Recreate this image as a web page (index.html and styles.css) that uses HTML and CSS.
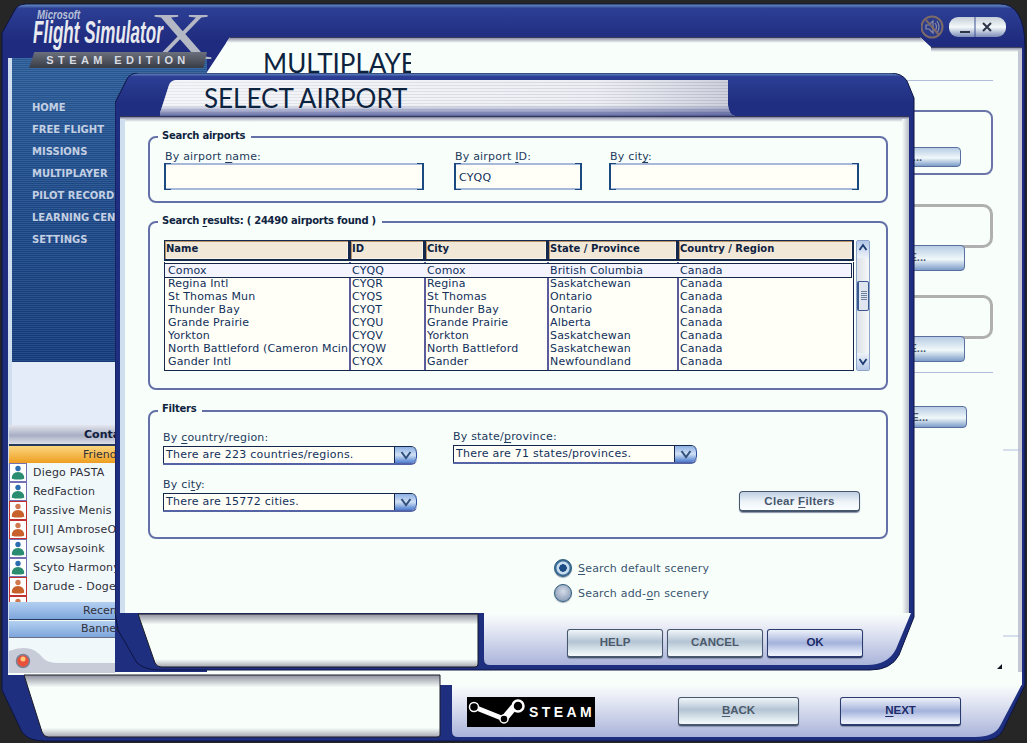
FILE: index.html
```html
<!DOCTYPE html>
<html lang="en">
<head>
    <meta charset="UTF-8">
    <title>Flight Simulator X - Select Airport</title>
    <link rel="stylesheet" href="styles.css">
</head>
<body>
<section class="main-window">
    <svg class="chrome" width="1027" height="743" viewBox="0 0 1027 743">
        <defs>
            <linearGradient id="mainBlue" x1="0" y1="0" x2="0" y2="1">
                <stop offset="0" stop-color="#6f97c9"/>
                <stop offset="0.006" stop-color="#2c3f95"/>
                <stop offset="0.05" stop-color="#1f2b7e"/>
                <stop offset="1" stop-color="#1f2f80"/>
            </linearGradient>
            <linearGradient id="topShade" x1="0" y1="0" x2="0" y2="1">
                <stop offset="0" stop-color="#080c30"/>
                <stop offset="0.25" stop-color="#9a9cb0"/>
                <stop offset="1" stop-color="#f8fffb"/>
            </linearGradient>
            <linearGradient id="footFill" x1="0" y1="0" x2="0" y2="1">
                <stop offset="0" stop-color="#f8fffb"/>
                <stop offset="0.2" stop-color="#eef0f8"/>
                <stop offset="1" stop-color="#aab4da"/>
            </linearGradient>
            <linearGradient id="boxFill" x1="0" y1="0" x2="0" y2="1">
                <stop offset="0" stop-color="#8d8f9c"/>
                <stop offset="0.2" stop-color="#f8fffb"/>
                <stop offset="0.85" stop-color="#f8fffb"/>
                <stop offset="1" stop-color="#a5a7b0"/>
            </linearGradient>
        </defs>
        <path d="M2 33 L16 8 Q19 4 26 4 L1000 4 Q1012 4 1018 14 Q1025 25 1025 47 L1025 685 L1003 730 Q998 741 980 741 L45 741 Q28 741 22 732 L2 690 Z" fill="url(#mainBlue)" stroke="#0c1440" stroke-width="1"/>
        <path d="M230 37 L920 37 L931 47 L1022 47 L1022 685 L207 685 L207 72 Z" fill="#f8fffb"/>
        <path d="M230 37 L920 37 L926 43 L226 43 Z" fill="url(#topShade)"/>
        <rect x="931" y="47" width="91" height="5" fill="url(#topShade)"/>
        <rect x="1018" y="50" width="4" height="635" fill="#c5c8d4"/>
        <path d="M440 672 L1022 672 L1022 685 L440 685 Z" fill="#f8fffb"/>
        <path d="M452 684 L1022 684 L1000 726 Q994 737 975 737 L458 737 Q452 737 452 731 Z" fill="url(#footFill)"/>
        <rect x="8" y="672" width="432" height="3" fill="#f8fffb"/>
        <path d="M24 675 L440 675 L440 735 Q440 737 437 737 L48 737 Q44 737 42 732 Z" fill="url(#boxFill)" stroke="#1a1a28" stroke-width="1"/>
        <line x1="1003" y1="450" x2="1022" y2="450" stroke="#b4bcdc"/>
        <line x1="1003" y1="636" x2="1022" y2="636" stroke="#b4bcdc"/>
        <path d="M1002 664 L1002 669 L997 669 Z" fill="#10141c"/>
    </svg>

    <div class="logo">
        <span class="logo-x">X</span>
        <span class="logo-ms">Microsoft</span>
        <span class="logo-fs">Flight Simulator</span>
        <span class="logo-band">STEAM EDITION</span>
    </div>

    <svg class="win-controls" width="90" height="26" viewBox="0 0 90 26">
        <defs>
            <linearGradient id="pill" x1="0" y1="0" x2="0" y2="1">
                <stop offset="0" stop-color="#c4ccd8"/>
                <stop offset="0.5" stop-color="#f4fafa"/>
                <stop offset="1" stop-color="#7c8cb8"/>
            </linearGradient>
        </defs>
        <circle cx="11" cy="13" r="10.5" fill="#2a3a8c" stroke="#7d6a68" stroke-width="2"/>
        <path d="M5 11 L8 11 L12 7 L12 19 L8 15 L5 15 Z" fill="none" stroke="#8a8ca0" stroke-width="1.2"/>
        <path d="M14 9 Q17 13 14 17 M16 7 Q20 13 16 19" fill="none" stroke="#8a8ca0" stroke-width="1.2"/>
        <line x1="5" y1="6" x2="18" y2="21" stroke="#7d6a68" stroke-width="2"/>
        <rect x="28" y="3" width="57" height="20" rx="9" fill="url(#pill)"/>
        <line x1="54" y1="3" x2="54" y2="23" stroke="#3c5098"/>
        <rect x="39" y="17" width="10" height="2" fill="#2c3448"/>
        <path d="M62 9 L70 17 M70 9 L62 17" stroke="#2c3448" stroke-width="2"/>
    </svg>

    <div class="left-col">
        <nav class="side-nav">
            <a>HOME</a>
            <a>FREE FLIGHT</a>
            <a>MISSIONS</a>
            <a>MULTIPLAYER</a>
            <a>PILOT RECORDS</a>
            <a>LEARNING CENTER</a>
            <a>SETTINGS</a>
        </nav>
        <div class="side-gap"></div>
        <div class="contacts">
            <div class="contacts-head">Contacts</div>
            <div class="group group-open">Friends</div>
            <ul class="buddy-list">
                <li><svg class="buddy on" viewBox="0 0 18 18"><circle class="head" cx="9" cy="4.5" r="3"/><path d="M2 16 Q2 8.5 9 8.5 Q16 8.5 16 16 Q9 18 2 16 Z"/></svg>Diego PASTA</li>
                <li><svg class="buddy on" viewBox="0 0 18 18"><circle class="head" cx="9" cy="4.5" r="3"/><path d="M2 16 Q2 8.5 9 8.5 Q16 8.5 16 16 Q9 18 2 16 Z"/></svg>RedFaction</li>
                <li><svg class="buddy off" viewBox="0 0 18 18"><circle class="head" cx="9" cy="4.5" r="3"/><path d="M2 16 Q2 8.5 9 8.5 Q16 8.5 16 16 Q9 18 2 16 Z"/></svg>Passive Menis</li>
                <li><svg class="buddy off" viewBox="0 0 18 18"><circle class="head" cx="9" cy="4.5" r="3"/><path d="M2 16 Q2 8.5 9 8.5 Q16 8.5 16 16 Q9 18 2 16 Z"/></svg>[UI] AmbroseO</li>
                <li><svg class="buddy on" viewBox="0 0 18 18"><circle class="head" cx="9" cy="4.5" r="3"/><path d="M2 16 Q2 8.5 9 8.5 Q16 8.5 16 16 Q9 18 2 16 Z"/></svg>cowsaysoink</li>
                <li><svg class="buddy on" viewBox="0 0 18 18"><circle class="head" cx="9" cy="4.5" r="3"/><path d="M2 16 Q2 8.5 9 8.5 Q16 8.5 16 16 Q9 18 2 16 Z"/></svg>Scyto Harmony</li>
                <li><svg class="buddy off" viewBox="0 0 18 18"><circle class="head" cx="9" cy="4.5" r="3"/><path d="M2 16 Q2 8.5 9 8.5 Q16 8.5 16 16 Q9 18 2 16 Z"/></svg>Darude - Doge</li>
                <li><svg class="buddy off" viewBox="0 0 18 18"><circle class="head" cx="9" cy="4.5" r="3"/><path d="M2 16 Q2 8.5 9 8.5 Q16 8.5 16 16 Q9 18 2 16 Z"/></svg></li>
            </ul>
            <div class="group">Recent</div>
            <div class="group group-last">Banned</div>
            <div class="contacts-foot">
                <svg width="106" height="36" viewBox="0 0 106 36">
                    <path d="M0 13 Q12 8 22 11 Q28 13 34 20 Q38 25 50 25 L106 25 L106 36 L0 36 Z" fill="#c8ccd8"/>
                    <circle cx="14" cy="23" r="6.5" fill="#e8503c" stroke="#7a8498" stroke-width="1.5"/>
                    <circle cx="14" cy="21" r="2.5" fill="#ffc878"/>
                </svg>
            </div>
        </div>
    </div>

    <div class="mp-page">
        <h1 class="mp-title">MULTIPLAYER</h1>
        <hr class="mp-rule">
        <div class="mp-box mp-box1"><a class="mp-btn">CHANGE...</a></div>
        <div class="mp-box mp-box2"><a class="mp-btn">CHANGE...</a></div>
        <div class="mp-box mp-box2 mp-box3"><a class="mp-btn">CHANGE...</a></div>
        <hr class="mp-rule mp-rule2">
        <a class="mp-btn mp-btn4">CHANGE...</a>
    </div>

    <div class="main-foot">
        <div class="steam-logo">
            <svg width="60" height="30" viewBox="0 0 60 30">
                <path d="M7 10 L37 22" fill="none" stroke="#fff" stroke-width="5"/>
                <path d="M37 22 L47 10" fill="none" stroke="#fff" stroke-width="7"/>
                <circle cx="7" cy="10" r="4.5" fill="#000" stroke="#fff" stroke-width="1.5"/>
                <circle cx="51" cy="9" r="5.5" fill="#000" stroke="#fff" stroke-width="2.5"/>
                <circle cx="37" cy="22" r="4" fill="#000" stroke="#fff" stroke-width="1.5"/>
            </svg>
            <span>STEAM</span>
        </div>
        <a class="btn btn-big"><u>B</u>ACK</a>
        <a class="btn btn-big btn-primary"><u>N</u>EXT</a>
    </div>
</section>

<section class="dialog">
    <svg class="chrome" width="800" height="598" viewBox="0 0 800 598">
        <defs>
            <pattern id="tabStripes" width="4" height="3" patternUnits="userSpaceOnUse">
                <rect width="4" height="3" fill="#e8eaf0"/>
                <rect width="4" height="1" fill="#c8ccd8"/>
            </pattern>
            <linearGradient id="tabFade" x1="0" y1="0" x2="1" y2="0">
                <stop offset="0" stop-color="#ffffff" stop-opacity="0.55"/>
                <stop offset="0.75" stop-color="#ffffff" stop-opacity="0.25"/>
                <stop offset="1" stop-color="#8c92aa" stop-opacity="0.3"/>
            </linearGradient>
            <linearGradient id="tabBottom" x1="0" y1="0" x2="0" y2="1">
                <stop offset="0" stop-color="#1f2b7e" stop-opacity="0"/>
                <stop offset="0.7" stop-color="#1f2b7e" stop-opacity="0"/>
                <stop offset="1" stop-color="#1f2b7e" stop-opacity="0.7"/>
            </linearGradient>
            <linearGradient id="dlgBlue" x1="0" y1="0" x2="0" y2="1">
                <stop offset="0" stop-color="#6f97c9"/>
                <stop offset="0.006" stop-color="#2c3f95"/>
                <stop offset="0.05" stop-color="#1f2e80"/>
                <stop offset="1" stop-color="#1f2f80"/>
            </linearGradient>
            <linearGradient id="dlgFoot" x1="0" y1="0" x2="0" y2="1">
                <stop offset="0" stop-color="#f8fffb"/>
                <stop offset="0.2" stop-color="#eef0f8"/>
                <stop offset="1" stop-color="#aab4da"/>
            </linearGradient>
            <linearGradient id="dlgBox" x1="0" y1="0" x2="0" y2="1">
                <stop offset="0" stop-color="#8d8f9c"/>
                <stop offset="0.2" stop-color="#f8fffb"/>
                <stop offset="0.85" stop-color="#f8fffb"/>
                <stop offset="1" stop-color="#a5a7b0"/>
            </linearGradient>
            <linearGradient id="dlgTop" x1="0" y1="0" x2="0" y2="1">
                <stop offset="0" stop-color="#080c30"/>
                <stop offset="0.3" stop-color="#a4a6ba"/>
                <stop offset="1" stop-color="#f8fffb"/>
            </linearGradient>
            <linearGradient id="dlgRight" x1="0" y1="0" x2="1" y2="0">
                <stop offset="0" stop-color="#f8fffb"/>
                <stop offset="1" stop-color="#b8bcc8"/>
            </linearGradient>
        </defs>
        <path d="M0 30 L12 6 Q15 0 24 0 L775 0 Q787 0 792 8 L799 25 L799 544 L784 582 Q776 597 755 597 L45 597 Q30 597 22 590 L3 557 L0 540 Z" fill="url(#dlgBlue)" stroke="#0c1440" stroke-width="1"/>
        <path d="M45 40 L54 12 Q56 7 62 7 L613 7 L613 32 Q614 42 620 43 L45 43 Z" fill="url(#tabStripes)"/>
        <path d="M45 40 L54 12 Q56 7 62 7 L613 7 L613 32 Q614 42 620 43 L45 43 Z" fill="url(#tabFade)"/>
        <path d="M45 40 L54 12 Q56 7 62 7 L613 7 L613 32 Q614 42 620 43 L45 43 Z" fill="url(#tabBottom)"/>
        <rect x="5" y="43" width="789" height="497" fill="#f8fffb"/>
        <rect x="5" y="43" width="789" height="6" fill="url(#dlgTop)"/>
        <rect x="5" y="46" width="5" height="494" fill="#cfdff0"/>
        <rect x="787" y="46" width="7" height="494" fill="url(#dlgRight)"/>
        <path d="M369 540 L796 540 L781 576 Q773 592 752 592 L375 592 Q369 592 369 586 Z" fill="url(#dlgFoot)"/>
        <path d="M23 541 L363 541 L363 591 Q363 594 360 594 L46 594 Q42 594 40 590 Z" fill="url(#dlgBox)" stroke="#1a1a28" stroke-width="1"/>
    </svg>

    <h2 class="dlg-title">SELECT AIRPORT</h2>

    <div class="dlg-body">
        <div class="fset fset-search">
            <span class="legend">Search airports</span>
            <div class="search-row">
                <div class="col-name">
                    <label>By airport <u>n</u>ame:</label>
                    <div class="field"></div>
                </div>
                <div class="col-id">
                    <label>By airport <u>I</u>D:</label>
                    <div class="field">CYQQ</div>
                </div>
                <div class="col-city">
                    <label>By cit<u>y</u>:</label>
                    <div class="field"></div>
                </div>
            </div>
        </div>

        <div class="fset fset-results">
            <span class="legend">Search <u>r</u>esults: ( 24490 airports found )</span>
            <div class="results-wrap">
                <div class="grid-wrap">
                    <div class="grid-head">
                        <span>Name</span><span>ID</span><span>City</span><span>State / Province</span><span>Country / Region</span>
                    </div>
                    <div class="grid-body">
                        <div class="grid-row selected"><span>Comox</span><span>CYQQ</span><span>Comox</span><span>British Columbia</span><span>Canada</span></div>
                        <div class="grid-row"><span>Regina Intl</span><span>CYQR</span><span>Regina</span><span>Saskatchewan</span><span>Canada</span></div>
                        <div class="grid-row"><span>St Thomas Mun</span><span>CYQS</span><span>St Thomas</span><span>Ontario</span><span>Canada</span></div>
                        <div class="grid-row"><span>Thunder Bay</span><span>CYQT</span><span>Thunder Bay</span><span>Ontario</span><span>Canada</span></div>
                        <div class="grid-row"><span>Grande Prairie</span><span>CYQU</span><span>Grande Prairie</span><span>Alberta</span><span>Canada</span></div>
                        <div class="grid-row"><span>Yorkton</span><span>CYQV</span><span>Yorkton</span><span>Saskatchewan</span><span>Canada</span></div>
                        <div class="grid-row"><span>North Battleford (Cameron Mcintosh)</span><span>CYQW</span><span>North Battleford</span><span>Saskatchewan</span><span>Canada</span></div>
                        <div class="grid-row"><span>Gander Intl</span><span>CYQX</span><span>Gander</span><span>Newfoundland</span><span>Canada</span></div>
                    </div>
                </div>
                <div class="scrollbar">
                    <div class="sb-arrow"><svg width="12" height="15" viewBox="0 0 12 15"><path d="M2.5 9 L6 4 L9.5 9" fill="none" stroke="#1a3a70" stroke-width="1.8"/></svg></div>
                    <div class="sb-track"><div class="sb-thumb"></div></div>
                    <div class="sb-arrow sb-down"><svg width="12" height="15" viewBox="0 0 12 15"><path d="M2.5 6 L6 11 L9.5 6" fill="none" stroke="#1a3a70" stroke-width="1.8"/></svg></div>
                </div>
            </div>
        </div>

        <div class="fset fset-filters">
            <span class="legend">Filters</span>
            <div class="filter-grid">
                <div>
                    <label>By <u>c</u>ountry/region:</label>
                    <div class="combo"><span>There are 223 countries/regions.</span><i><svg width="14" height="10" viewBox="0 0 14 10"><path d="M2.5 2 L7 8 L11.5 2" fill="none" stroke="#30507c" stroke-width="2"/></svg></i></div>
                </div>
                <div class="filter-state">
                    <label>By state/<u>p</u>rovince:</label>
                    <div class="combo combo-state"><span>There are 71 states/provinces.</span><i><svg width="14" height="10" viewBox="0 0 14 10"><path d="M2.5 2 L7 8 L11.5 2" fill="none" stroke="#30507c" stroke-width="2"/></svg></i></div>
                </div>
                <div>
                    <label>By ci<u>t</u>y:</label>
                    <div class="combo"><span>There are 15772 cities.</span><i><svg width="14" height="10" viewBox="0 0 14 10"><path d="M2.5 2 L7 8 L11.5 2" fill="none" stroke="#30507c" stroke-width="2"/></svg></i></div>
                </div>
                <a class="btn btn-clear">Clear <u>F</u>ilters</a>
            </div>
        </div>

        <div class="radios">
            <div class="radio checked"><i></i><span><u>S</u>earch default scenery</span></div>
            <div class="radio"><i></i><span>Search add-<u>o</u>n scenery</span></div>
        </div>
    </div>

    <div class="dlg-foot">
        <a class="btn">HELP</a>
        <a class="btn">CANCEL</a>
        <a class="btn btn-primary btn-ok">OK</a>
    </div>
</section>
</body>
</html>
```

FILE: styles.css
```css
*{
    margin: 0;
    padding: 0;
    box-sizing: border-box;
}
html{
    font-size: 11px;
    font-family: "DejaVu Sans", Verdana, sans-serif;
}
body{
    position: relative;
    width: 1027px;
    height: 743px;
    overflow: hidden;
    background: #262626;
    color: #12305a;
}
u{
    text-underline-offset: 2px;
}

/*---windows are placed on the desktop-------*/
.main-window{
    position: absolute;
    left: 0;
    top: 0;
    width: 1027px;
    height: 743px;
}
.dialog{
    position: absolute;
    left: 115px;
    top: 73px;
    width: 800px;
    height: 598px;
}
.chrome{
    position: absolute;
    left: 0;
    top: 0;
}

/*---logo-------*/
.logo{
    position: absolute;
    left: 28px;
    top: 8px;
    width: 190px;
    height: 62px;
    z-index: 3;
}
.logo span{
    position: absolute;
    font-family: "Liberation Sans", Arial, sans-serif;
}
.logo-ms{
    left: 9px;
    top: 0;
    font-size: 12px;
    font-weight: bold;
    font-style: italic;
    color: #b8c0d8;
    transform: scaleX(.8);
    transform-origin: left;
}
.logo-fs{
    left: 5px;
    top: 7px;
    font-size: 31px;
    font-weight: bold;
    font-style: italic;
    color: #e8eaf0;
    white-space: nowrap;
    transform: scaleX(.55);
    transform-origin: left;
}
.logo .logo-x{
    left: 122px;
    top: -6px;
    font-family: "Liberation Serif", serif;
    font-size: 68px;
    line-height: 68px;
    color: #b4b8c4;
    transform: scaleX(1.28);
    transform-origin: left;
}
.logo-band{
    left: 1px;
    top: 44px;
    width: 178px;
    height: 16px;
    background: linear-gradient(#6a707c, #383c46);
    clip-path: polygon(3% 0, 100% 0, 98% 100%, 0 100%);
    text-align: center;
    font-size: 11px;
    line-height: 16px;
    font-weight: bold;
    letter-spacing: 4.4px;
    color: #d8dce4;
    white-space: nowrap;
}
.win-controls{
    position: absolute;
    left: 921px;
    top: 14px;
}

/*---left column-------*/
.left-col{
    position: absolute;
    left: 8px;
    top: 58px;
    width: 199px;
    display: flex;
    flex-direction: column;
    border-left: 4px solid #cfdff0;
}
.side-nav{
    height: 304px;
    padding: 39px 0 0 20px;
    display: flex;
    flex-direction: column;
    background:
        repeating-linear-gradient(rgba(255,255,255,.09) 0 1px, rgba(0,0,0,.05) 1px 2px),
        linear-gradient(#2a5c9a, #1d4c8c 40%, #133b7c);
}
.side-nav a{
    height: 22px;
    line-height: 22px;
    font-size: 10px;
    font-weight: bold;
    color: #c3cfe2;
    white-space: nowrap;
}
.side-gap{
    height: 63px;
    background: #e4ecf9;
}
.contacts{
    margin-left: -3px;
    width: 106px;
    background: #f0f8fa;
}
.contacts-head{
    height: 21px;
    padding-left: 75px;
    font-size: 11px;
    line-height: 20px;
    font-weight: bold;
    color: #10203c;
    white-space: nowrap;
    background: linear-gradient(#e4e6ee, #a8aec4 55%, #dde0ea);
    border-bottom: 2px solid #2a3a5c;
}
.group{
    height: 18px;
    padding-left: 74px;
    line-height: 18px;
    font-size: 11px;
    color: #30303a;
    white-space: nowrap;
    background: linear-gradient(#b4d0f0, #7ea6dc);
    border-bottom: 1px solid #2a3a5c;
}
.group-open{
    height: 17px;
    background: linear-gradient(#fbd680, #ee9e20);
    border-bottom: 0;
}
.group-last{
    height: 17px;
    margin-top: 1px;
    line-height: 16px;
    padding-left: 72px;
    border-bottom-color: #68708c;
}
.buddy-list{
    list-style: none;
    height: 139px;
    overflow: hidden;
    background: #f0f8fa;
}
.buddy-list li{
    height: 19px;
    display: flex;
    align-items: center;
    gap: 6px;
    color: #30303a;
    white-space: nowrap;
    letter-spacing: .2px;
}
.buddy{
    flex: none;
    width: 18px;
    height: 19px;
    border: 1px solid #7470b4;
    background: #fff;
}
.buddy.on{
    fill: #2a8c70;
}
.buddy.on .head{
    fill: #2c6cb0;
}
.buddy.off{
    fill: #c8602c;
    border-color: #c03030;
}
.buddy.off .head{
    fill: #d07850;
}
.contacts-foot{
    height: 35px;
    overflow: hidden;
}
.contacts-foot svg{
    display: block;
}

/*---multiplayer page behind the dialog-------*/
.mp-page{
    position: absolute;
    left: 263px;
    top: 48px;
    width: 730px;
    display: flex;
    flex-direction: column;
}
.mp-title{
    width: 148px;
    height: 25px;
    overflow: hidden;
    font-family: Lato, "Open Sans", sans-serif;
    font-size: 26px;
    line-height: 31px;
    font-weight: normal;
    color: #0c2340;
    white-space: nowrap;
}
.mp-rule{
    margin-top: 7px;
    border: 0;
    border-top: 1px solid #b4bcdc;
}
.mp-rule2{
    margin-top: 33px;
}
.mp-box{
    margin-top: 29px;
    height: 65px;
    padding-top: 35px;
    border: 2px solid #6a74a8;
    border-radius: 8px;
}
.mp-box1 .mp-btn{
    width: 696px;
    height: 20px;
    line-height: 18px;
}
.mp-box2{
    margin-top: 29px;
    height: 44px;
    padding-top: 38px;
    border: 3px solid #b0b0b0;
    border-radius: 10px;
}
.mp-box3{
    margin-top: 47px;
}
.mp-btn{
    display: block;
    width: 699px;
    height: 26px;
    line-height: 22px;
    padding-right: 38px;
    text-align: right;
    font-family: "Liberation Sans", Arial, sans-serif;
    font-size: 11px;
    font-weight: bold;
    color: #4a5a6c;
    border: 1px solid #5a70a0;
    border-radius: 4px;
    background: linear-gradient(#b8cce4, #f0f8fa 55%, #7c9cc8);
    white-space: nowrap;
}
.mp-btn4{
    margin-top: 33px;
    width: 704px;
    height: 22px;
    line-height: 20px;
}
.main-foot{
    position: absolute;
    left: 467px;
    top: 697px;
    width: 494px;
    display: flex;
    align-items: flex-start;
}
.steam-logo{
    flex: none;
    width: 128px;
    height: 30px;
    margin-right: 83px;
    background: #000;
    display: flex;
    align-items: center;
}
.steam-logo span{
    margin-left: 2px;
    font-family: "Liberation Sans", Arial, sans-serif;
    font-size: 14px;
    font-weight: bold;
    letter-spacing: 3.4px;
    color: #fff;
}

/*---buttons-------*/
.btn{
    display: block;
    width: 96px;
    height: 29px;
    line-height: 25px;
    text-align: center;
    font-family: "Liberation Sans", Arial, sans-serif;
    font-size: 11.5px;
    font-weight: bold;
    color: #4c5a6c;
    border: 1px solid #46566c;
    border-bottom-width: 2px;
    border-radius: 3px;
    background: linear-gradient(#f0f6f8, #b4c4d4 45%, #e4eef2 85%, #f6fafa);
    box-shadow: 0 1px 1px #8890a8;
}
.btn-big{
    width: 121px;
    margin-right: 41px;
}
.btn-big:last-child{
    margin-right: 0;
}
.btn-primary{
    color: #1c2c68;
    border-color: #2a3a6c;
    background: linear-gradient(#eef2fa, #a4b2dc 50%, #dfe6f6 85%, #f0f4fc);
}
.btn-clear{
    justify-self: end;
    align-self: end;
    width: 121px;
    height: 21px;
    line-height: 18px;
    letter-spacing: .3px;
    border-radius: 4px;
    color: #46566c;
    background: linear-gradient(#c0cfe4, #eef4f8 55%, #fbfeff);
}

/*---dialog-------*/
.dlg-title{
    position: absolute;
    left: 89px;
    top: 9px;
    font-family: Lato, "Open Sans", sans-serif;
    font-size: 26px;
    line-height: 32px;
    font-weight: normal;
    color: #0c2340;
    white-space: nowrap;
}
.dlg-body{
    position: absolute;
    left: 33px;
    top: 63px;
    width: 740px;
    display: flex;
    flex-direction: column;
}
.dlg-foot{
    position: absolute;
    left: 452px;
    top: 556px;
    display: flex;
    gap: 4px;
}
.fset{
    position: relative;
    border: 2px solid #6470a8;
    border-radius: 8px;
}
.legend{
    position: absolute;
    left: 8px;
    top: -9px;
    padding: 0 6px 0 4px;
    background: #f8fffb;
    font-size: 10px;
    font-weight: bold;
    letter-spacing: -.25px;
    line-height: 14px;
    color: #0f2340;
    white-space: nowrap;
}
label{
    display: block;
    line-height: 14px;
    letter-spacing: .2px;
    white-space: nowrap;
    color: #243a5c;
}
.fset-search{
    height: 67px;
    padding: 12px 0 0 14px;
}
.search-row{
    display: flex;
}
.search-row label{
    padding-left: 1px;
    line-height: 13px;
}
.col-name{
    width: 260px;
    margin-right: 30px;
}
.col-id{
    width: 128px;
    margin-right: 27px;
}
.col-city{
    width: 250px;
}
.field{
    position: relative;
    height: 27px;
    padding-left: 5px;
    line-height: 26px;
    letter-spacing: .2px;
    color: #12305a;
    background: #fffff8;
    border-top: 2px solid #a8b8d8;
    border-bottom: 2px solid #a8b8d8;
}
.field::before,
.field::after{
    content: "";
    position: absolute;
    top: -2px;
    bottom: -2px;
    width: 5px;
    border: 1px solid #1a4a80;
    border-width: 1px 0;
}
.field::before{
    left: 0;
    border-left-width: 2px;
}
.field::after{
    right: 0;
    border-right-width: 2px;
}
.fset-results{
    margin-top: 18px;
    height: 169px;
    padding: 17px 0 0 14px;
}
.results-wrap{
    display: flex;
}
.grid-wrap{
    width: 692px;
}
.grid-head,
.grid-row{
    display: grid;
    grid-template-columns: 186px 75px 123px 130px 176px;
}
.grid-head{
    width: 690px;
    height: 21px;
    margin-bottom: 1px;
    background: #14284c;
}
.grid-head span{
    margin: 1px 2px 2px 1px;
    padding-left: 1px;
    line-height: 16px;
    font-size: 10px;
    font-weight: bold;
    color: #0f2340;
    background: #f2e8d8;
    box-shadow: inset 1px 1px 0 #b89468, inset -1px -1px 0 #f8f4ea;
}
.grid-body{
    position: relative;
    width: 690px;
    height: 109px;
    padding-top: 2px;
    border: 1px solid #14284c;
    border-top: 0;
    background:
        linear-gradient(#5c5c9c, #5c5c9c) 184px 0 / 2px 100% no-repeat,
        linear-gradient(#5c5c9c, #5c5c9c) 259px 0 / 2px 100% no-repeat,
        linear-gradient(#5c5c9c, #5c5c9c) 382px 0 / 2px 100% no-repeat,
        linear-gradient(#5c5c9c, #5c5c9c) 512px 0 / 2px 100% no-repeat,
        #fffff8;
}
.grid-row{
    height: 13px;
    line-height: 13px;
    margin-left: -1px;
}
.grid-row span{
    padding-left: 2px;
    overflow: hidden;
    white-space: nowrap;
    letter-spacing: .15px;
}
.grid-row span:first-child{
    margin-right: 2px;
    padding-left: 4px;
}
.grid-row.selected{
    margin-left: 0;
    margin-right: 2px;
    grid-template-columns: 185px 75px 123px 130px 173px;
    outline: 1px solid #14284c;
    background: #f4f4ff;
}
.grid-row.selected span:first-child{
    padding-left: 3px;
}
.scrollbar{
    width: 14px;
    height: 131px;
    display: flex;
    flex-direction: column;
    border: 1px solid #8ca4c8;
    border-radius: 2px;
    background: linear-gradient(90deg, #dde1e6, #f6f8f8);
}
.sb-arrow{
    height: 17px;
    flex: none;
    background: linear-gradient(#b4c8e8, #eef2f8);
}
.sb-down{
    background: linear-gradient(#eef2f8, #b4c8e8);
}
.sb-arrow svg{
    display: block;
}
.sb-track{
    flex: 1;
    padding-top: 23px;
}
.sb-thumb{
    height: 30px;
    border: 1px solid #3a5a90;
    border-width: 1px 1px 1px 2px;
    border-radius: 2px;
    background:
        repeating-linear-gradient(#7080a0 0 1px, transparent 1px 2px) center / 6px 10px no-repeat,
        #dfe6f0;
}
.fset-filters{
    margin-top: 20px;
    height: 129px;
    padding: 19px 0 0 13px;
}
.fset-filters .legend{
    top: -10px;
}
.filter-grid{
    display: grid;
    grid-template-columns: 290px 407px;
    row-gap: 13px;
}
.filter-state{
    margin-top: -1px;
}
.combo{
    margin-top: 1px;
    width: 254px;
    height: 19px;
    display: flex;
    border: 1px solid #14284c;
    border-right: 0;
    border-bottom: 2px solid #5464a4;
    border-radius: 0 6px 6px 0;
    background: #fffff8;
    line-height: 16px;
}
.combo span{
    flex: 1;
    padding-left: 2px;
    letter-spacing: .25px;
    white-space: nowrap;
}
.combo i{
    flex: none;
    width: 23px;
    display: flex;
    align-items: center;
    justify-content: center;
    border-left: 1px solid #14284c;
    border-right: 1px solid #2a50a0;
    border-radius: 0 6px 6px 0;
    background: linear-gradient(#8cb0e4, #d0e0f4 50%, #4c7cd0);
}
.combo-state{
    width: 244px;
}
.radios{
    margin: 20px 0 0 406px;
    display: flex;
    flex-direction: column;
    gap: 7px;
}
.radio{
    display: flex;
    align-items: center;
    gap: 6px;
    color: #3a5470;
    letter-spacing: .2px;
    white-space: nowrap;
}
.radio i{
    flex: none;
    width: 18px;
    height: 18px;
    border-radius: 50%;
    border: 1px solid #2a5a7c;
    background: radial-gradient(circle at 50% 40%, #d4dcea, #94a4bc 70%, #b8d0dc);
    box-shadow: 0 1px 1px #a0a8b8;
}
.radio.checked i{
    background: radial-gradient(circle, #1c4c84 0 3.5px, #c8dcf0 4px 6px, #3c6c98 7px);
}
```
